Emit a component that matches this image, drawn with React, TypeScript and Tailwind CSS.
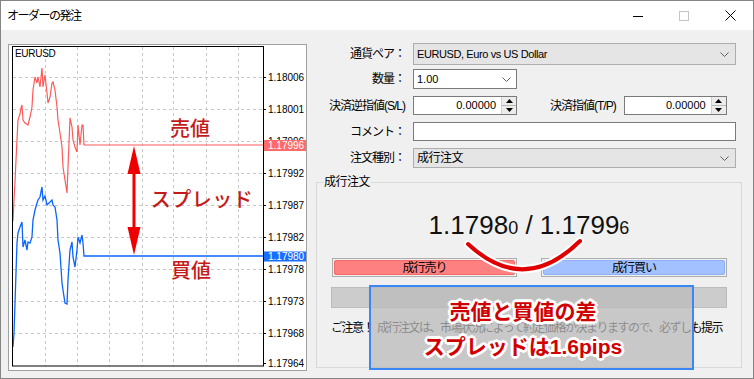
import React from 'react';

const redPts: [number, number][] = [
  [13, 221], [14, 200], [15, 182], [16, 160], [17, 140], [18, 120], [20, 114], [21, 108], [22, 105], [23, 120], [25, 123], [28, 125], [30, 117],
  [32, 107], [33, 90], [35, 77], [37, 83], [38, 77], [40, 87], [42, 68], [43, 87], [45, 75], [47, 93], [48, 103], [50, 97],
  [52, 83], [53, 82], [55, 90], [57, 107], [58, 120], [60, 133], [62, 147], [63, 167], [65, 180], [67, 193], [68, 167],
  [70, 118], [72, 127], [73, 140], [75, 147], [77, 152], [78, 125], [80, 145], [82, 125], [83, 125], [84, 145], [263, 145],
];

const bluePts: [number, number][] = [
  [13, 347], [14, 333], [15, 303], [16, 273], [17, 243], [18, 233], [20, 227], [22, 222], [23, 247], [25, 240], [27, 250],
  [28, 242], [30, 243], [32, 237], [33, 220], [35, 210], [37, 203], [38, 200], [40, 197], [42, 187], [43, 200], [45, 196],
  [47, 205], [50, 202], [52, 200], [53, 205], [55, 207], [57, 220], [58, 240], [60, 253], [62, 283], [63, 290], [65, 303],
  [67, 304], [68, 280], [70, 250], [72, 242], [73, 257], [75, 267], [77, 250], [78, 237], [80, 243], [82, 235], [83, 243],
  [84, 256], [263, 256],
];

const gridX = [45, 77, 109, 142, 173, 206, 238];
const gridY = [77, 109, 141, 173, 205, 237, 269, 301, 333];
const axisLabels: [number, string][] = [
  [77, '1.18006'], [109, '1.18001'], [173, '1.17992'], [205, '1.17987'],
  [237, '1.17982'], [269, '1.17978'], [301, '1.17973'], [333, '1.17968'], [363, '1.17964'],
];

const toPoints = (pts: [number, number][]) => pts.map(p => p.join(',')).join(' ');

const Chart = () => (
  <div className="ml-[7px] mt-[14px] w-[299px] h-[327px] border border-[#a0a0a0] bg-white shrink-0">
    <svg width="297" height="325" viewBox="9 45 297 325">
      <defs>
        <clipPath id="hiddenLabel">
          <rect x="264" y="130" width="42" height="10" />
        </clipPath>
      </defs>
      {gridX.map(x => (
        <line key={x} x1={x + 0.5} y1={47} x2={x + 0.5} y2={366} stroke="#c8c8c8" strokeDasharray="3 3" />
      ))}
      {gridY.map(y => (
        <line key={y} x1={13} y1={y + 0.5} x2={263} y2={y + 0.5} stroke="#c8c8c8" strokeDasharray="3 3" />
      ))}
      <polyline points={toPoints(redPts)} fill="none" stroke="#ff5a5a" strokeWidth="1.2" />
      <polyline points={toPoints(bluePts)} fill="none" stroke="#0a64ff" strokeWidth="1.3" />
      <rect x="12.5" y="46.5" width="251" height="319.5" fill="none" stroke="#000" />
      {axisLabels.map(([y, t]) => (
        <g key={t}>
          <line x1={263} y1={y + 0.5} x2={266} y2={y + 0.5} stroke="#000" />
          <text x={268} y={y + 3.6} fontSize="10" fontFamily="Liberation Sans" fill="#000">{t}</text>
        </g>
      ))}
      <line x1={263} y1={141.5} x2={266} y2={141.5} stroke="#000" />
      <text x={268} y={144.6} fontSize="10" fontFamily="Liberation Sans" fill="#000" clipPath="url(#hiddenLabel)">1.17996</text>
      <rect x="264" y="140" width="42" height="11" fill="#ff6b6b" />
      <text x={268} y={149} fontSize="10" fontFamily="Liberation Sans" fill="#fff">1.17996</text>
      <rect x="264" y="251.5" width="42" height="10" fill="#1a6dff" />
      <text x={268} y={260} fontSize="10" fontFamily="Liberation Sans" fill="#fff">1.17980</text>
      <text x={15} y={57} fontSize="10" fontFamily="Liberation Sans" fill="#000" letterSpacing="-0.3">EURUSD</text>

      <text x={190} y={136} fontSize="20" fontWeight="500" fontFamily="Noto Sans CJK JP" fill="#c41a1a" textAnchor="middle">売値</text>
      <text x={202} y={207} fontSize="20" fontWeight="500" fontFamily="Noto Sans CJK JP" fill="#c41a1a" textAnchor="middle" letterSpacing="0.5">スプレッド</text>
      <text x={191} y={278} fontSize="20" fontWeight="500" fontFamily="Noto Sans CJK JP" fill="#c41a1a" textAnchor="middle">買値</text>

      <rect x="132.5" y="168" width="3" height="64" fill="#ee0000" />
      <polygon points="134,146 127.5,174 140.5,174" fill="#ee0000" />
      <polygon points="134,255 127.5,227 140.5,227" fill="#ee0000" />
    </svg>
  </div>
);

const Chevron = () => (
  <svg width="9" height="5" viewBox="0 0 9 5" className="shrink-0">
    <path d="M0.5 0.5 L4.5 4.5 L8.5 0.5" fill="none" stroke="#606060" strokeWidth="1" />
  </svg>
);

const Spinner = () => (
  <div className="w-[15px] h-full flex flex-col border-l border-[#cfcfcf] bg-[#ececec] shrink-0">
    <div className="flex-1 flex items-center justify-center border-b border-[#b8b8b8]">
      <svg width="7" height="4" viewBox="0 0 7 4"><path d="M3.5 0 L7 4 L0 4Z" fill="#000" /></svg>
    </div>
    <div className="flex-1 flex items-center justify-center">
      <svg width="7" height="4" viewBox="0 0 7 4"><path d="M0 0 L7 0 L3.5 4Z" fill="#000" /></svg>
    </div>
  </div>
);

const Label = ({ children }: { children: React.ReactNode }) => (
  <div className="w-[98px] shrink-0 text-right text-[12px] tracking-[-1px] leading-none">{children}</div>
);

const NumberInput = ({ width }: { width: string }) => (
  <div className={`${width} h-full bg-white border border-[#7a7a7a] flex items-stretch`}>
    <div className="flex-1 flex items-center justify-end pr-[5px] text-[11px]">0.00000</div>
    <Spinner />
  </div>
);

const Form = () => (
  <div className="flex-1 pt-[13px] pr-[11px] text-black">
    <div className="flex items-center h-[22px] mr-[6px]">
      <Label>通貨ペア：</Label>
      <div className="ml-[8px] flex-1 h-full bg-[#e5e5e5] border border-[#adadad] flex items-center pl-[3px] pr-[6px]">
        <span className="flex-1 text-[11px] tracking-[-0.4px]">EURUSD, Euro vs US Dollar</span>
        <Chevron />
      </div>
    </div>

    <div className="flex items-center h-[20px] mt-[4px] mr-[6px]">
      <Label>数量：</Label>
      <div className="ml-[8px] w-[104px] h-full bg-white border border-[#7a7a7a] flex items-center pl-[3px] pr-[5px]">
        <span className="flex-1 text-[11px]">1.00</span>
        <Chevron />
      </div>
    </div>

    <div className="flex items-center h-[19px] mt-[7px] mr-[6px]">
      <Label>決済逆指値(S/L)</Label>
      <div className="ml-[8px] h-full flex">
        <NumberInput width="w-[104px]" />
      </div>
      <div className="ml-[33px] text-[12px] tracking-[-1px]">決済指値(T/P)</div>
      <div className="ml-[8px] h-full flex">
        <NumberInput width="w-[103px]" />
      </div>
    </div>

    <div className="flex items-center h-[19px] mt-[7px] mr-[6px]">
      <Label>コメント：</Label>
      <div className="ml-[8px] flex-1 h-full bg-white border border-[#7a7a7a]" />
    </div>

    <div className="flex items-center h-[20px] mt-[7px] mr-[6px]">
      <Label>注文種別：</Label>
      <div className="ml-[8px] flex-1 h-full bg-[#e5e5e5] border border-[#adadad] flex items-center pl-[3px] pr-[6px]">
        <span className="flex-1 text-[12px] tracking-[-0.5px]">成行注文</span>
        <Chevron />
      </div>
    </div>

    <div className="relative mt-[14px] ml-[9px] h-[186px] border border-[#d8d8d8]">
      <div className="absolute left-[6px] -top-[9px] bg-[#f0f0f0] px-[1px] text-[12px] leading-[16px] tracking-[-0.5px]">成行注文</div>

      <div className="mt-[27px] h-[30px] flex justify-center items-baseline font-['Liberation_Sans',sans-serif] text-[#111] leading-[30px]">
        <span className="text-[26px]">1.1798</span>
        <span className="text-[18px]">0</span>
        <span className="text-[26px] whitespace-pre"> / 1.1799</span>
        <span className="text-[18px]">6</span>
      </div>

      <div className="mt-[18px] pl-[15px] flex gap-[24px]">
        <div className="w-[185px] h-[19px] border border-[#adadad] p-[1px]">
          <div className="h-full rounded-[2px] bg-[#ff8080] border border-[#f06a6a] flex items-center justify-center text-[12px] tracking-[-1px] leading-none">成行売り</div>
        </div>
        <div className="w-[186px] h-[19px] border border-[#adadad] p-[1px]">
          <div className="h-full rounded-[2px] bg-[#a3c1ff] border border-[#8eb0fa] flex items-center justify-center text-[12px] tracking-[-1px] leading-none">成行買い</div>
        </div>
      </div>

      <div className="mt-[10px] ml-[14px] w-[396px] h-[21px] bg-[#cccccc] border border-[#bcbcbc]" />

      <div className="mt-[12px] ml-[14px] w-[400px] h-[16px] leading-[16px] text-[12px] tracking-[-1.5px] whitespace-nowrap overflow-hidden">
        ご注意！<span className="ml-[4px]">成行注文は、市場状況によって約定価格が決まりますので、必ずしも提示</span>
      </div>
    </div>
  </div>
);

const TitleBar = () => (
  <div className="h-[29px] bg-white flex items-center shrink-0">
    <div className="pl-[6px] text-[12px] tracking-[-1.5px]">オーダーの発注</div>
    <div className="ml-auto flex h-full">
      <div className="w-[46px] flex items-center justify-center">
        <svg width="10" height="10" viewBox="0 0 10 10"><line x1="0" y1="5.5" x2="10" y2="5.5" stroke="#000" /></svg>
      </div>
      <div className="w-[46px] flex items-center justify-center">
        <svg width="10" height="10" viewBox="0 0 10 10"><rect x="0.5" y="0.5" width="9" height="9" fill="none" stroke="#c4c4c4" /></svg>
      </div>
      <div className="w-[46px] flex items-center justify-center">
        <svg width="11" height="11" viewBox="0 0 11 11">
          <path d="M0.5 0.5 L10.5 10.5 M10.5 0.5 L0.5 10.5" stroke="#000" strokeWidth="1" />
        </svg>
      </div>
    </div>
  </div>
);

export default function App() {
  return (
    <div className="relative w-[754px] h-[379px] border border-[#858585] bg-[#f0f0f0] flex flex-col overflow-hidden font-[family-name:'Liberation_Sans','Noto_Sans_CJK_JP',sans-serif] text-black">
      <TitleBar />
      <div className="flex flex-1">
        <Chart />
        <Form />
      </div>

      {/* 注釈: 売値と買値を結ぶ弧 */}
      <svg className="absolute left-[459px] top-[235px]" width="130" height="40" viewBox="0 0 130 40">
        <path d="M8 8 Q64 60 120 5" fill="none" stroke="#fff" strokeWidth="8" strokeLinecap="round" />
        <path d="M8 8 Q64 60 120 5" fill="none" stroke="#e00000" strokeWidth="4" strokeLinecap="round" />
      </svg>

      {/* 注釈ボックス */}
      <div className="absolute left-[368px] top-[284px] w-[325px] h-[85px] border-2 border-[#3a87f5] bg-[rgba(186,186,186,0.74)] flex flex-col items-center justify-center pr-[17px] pt-[3px] font-bold text-[21px] leading-[35px] text-[#d00000] [text-shadow:2px_0_#fff,-2px_0_#fff,0_2px_#fff,0_-2px_#fff,2px_2px_#fff,-2px_-2px_#fff,2px_-2px_#fff,-2px_2px_#fff,3px_0_#fff,-3px_0_#fff,0_3px_#fff,0_-3px_#fff]">
        <div>売値と買値の差</div>
        <div>スプレッドは1.6pips</div>
      </div>
    </div>
  );
}
